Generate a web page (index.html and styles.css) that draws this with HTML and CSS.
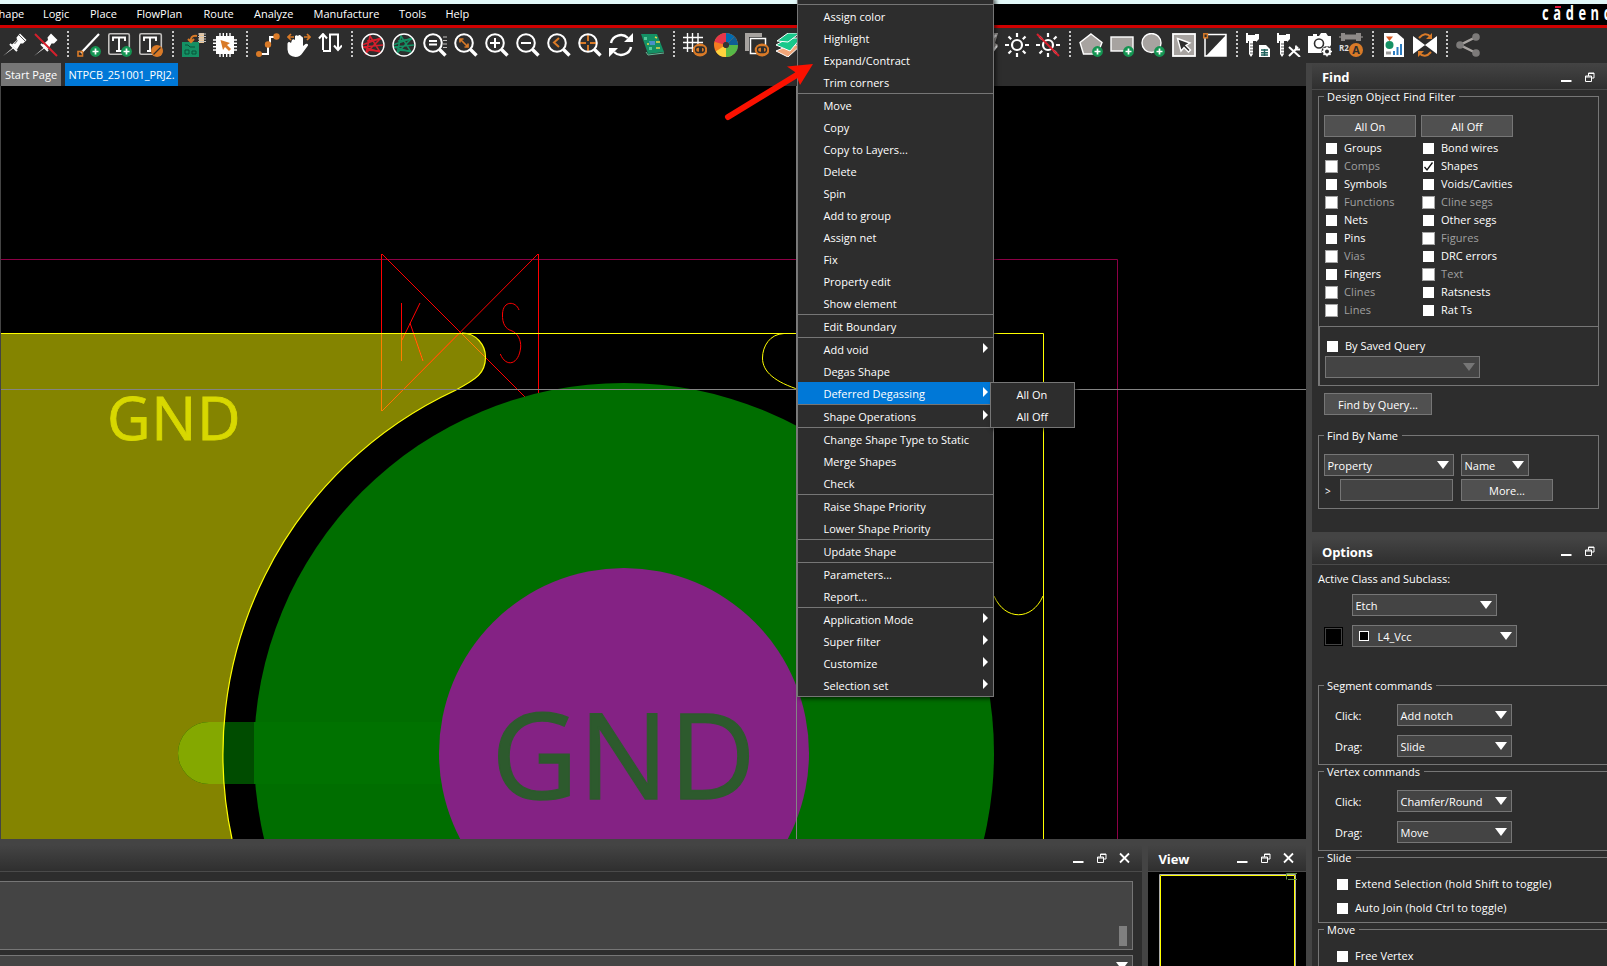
FILE: index.html
```html
<!DOCTYPE html>
<html lang="en">
<head>
<meta charset="utf-8">
<title>PCB Editor</title>
<link rel="stylesheet" href="styles.css">
</head>
<body>
<div class="app">
  <div class="titlestrip"></div>
  <nav class="menubar">
    <span class="m0">Shape</span><span class="m1">Logic</span><span class="m2">Place</span><span class="m3">FlowPlan</span><span class="m4">Route</span><span class="m5">Analyze</span><span class="m6">Manufacture</span><span class="m7">Tools</span><span>Help</span>
    <div class="brand"><span>cadence</span><i></i></div>
  </nav>
  <div class="redline"></div>
  <div class="toolbar">
    <svg class="ic" viewBox="0 0 24 24"><path d="M0 23L10 14.500L8 12.500L14 7L13.500 4.500L17 0.500L23.500 7L20 10.500L17.500 10.500L14 16.500L11.500 14.500Z" fill="#fff"/><path d="M8 11l6 6.500M14.500 7.500l-3 3.500M16 2l6 6" stroke="#2d2d2d" stroke-width=".8"/><path d="M7 11l7 7" stroke="#fff" stroke-width="2"/></svg>
    <svg class="ic" viewBox="0 0 24 24"><path d="M0 23L10 14.500L8 12.500L14 7L13.500 4.500L17 0.500L23.500 7L20 10.500L17.500 10.500L14 16.500L11.500 14.500Z" fill="#fff"/><path d="M7 11l7 7" stroke="#fff" stroke-width="2"/><path d="M1 1L23 23" stroke="#d61f2c" stroke-width="2"/></svg>
    <i class="sep"></i>
    <svg class="ic" viewBox="0 0 24 24"><path d="M4 20L22 1" stroke="#fff" stroke-width="2.200"/><rect x="1" y="18.500" width="4.500" height="4.500" fill="none" stroke="#d97a27" stroke-width="1.600"/><use href="#plus"/></svg>
    <svg class="ic" viewBox="0 0 24 24"><rect x=".8" y=".8" width="20.500" height="20.500" rx="1.500" fill="none" stroke="#c4c2c0" stroke-width="1.600"/><path d="M5 8V4.500H17V8M11 4.500V18M8 18H14" fill="none" stroke="#fff" stroke-width="1.900"/><use href="#plus"/></svg>
    <svg class="ic" viewBox="0 0 24 24"><rect x=".8" y=".8" width="21.500" height="20.500" rx="1.500" fill="none" stroke="#c4c2c0" stroke-width="1.600"/><path d="M5 8V4.500H17V8M11 4.500V18M8 18H12" fill="none" stroke="#fff" stroke-width="1.900"/><circle cx="18" cy="18" r="6" fill="#d97a27"/><path d="M14.500 21.500L21.500 14.500" stroke="#2d2d2d" stroke-width="1.200"/></svg>
    <i class="sep"></i>
    <svg class="ic" viewBox="0 0 24 24"><path d="M0 9H17V24H0Z" fill="#149064"/><path d="M3 17h4v4H3zM10 18h4v3h-4zM3 12h3l2 2h5" stroke="#0b5038" fill="none"/><path d="M15 3C10 2 8 5 9 9M6 6l3 3 3-3" stroke="#d97a27" stroke-width="2" fill="none"/><rect x="17" y="0" width="5" height="10" fill="#eec898"/><path d="M16 1h8M16 3.500h8M16 6h8M16 8.500h8" stroke="#c4c2c0"/></svg>
    <svg class="ic" viewBox="0 0 24 24"><path d="M7 0V24M10.300 0V24M13.700 0V24M17 0V24M0 7H24M0 10.300H24M0 13.700H24M0 17H24" stroke="#fff" stroke-width="1.400"/><rect x="3" y="3" width="18" height="18" fill="#fff"/><path d="M7.500 7L17 10L14 12L18 16L16 18L12 14L10 17Z" fill="#d97a27"/></svg>
    <i class="sep"></i>
    <svg class="ic" viewBox="0 0 24 24"><path d="M3 21H12V12H14V4H21" stroke="#fff" stroke-width="2" fill="none"/><g fill="#d97a27"><circle cx="3" cy="21" r="3"/><circle cx="12" cy="11.500" r="3.200"/><circle cx="20.500" cy="3.500" r="3.200"/></g></svg>
    <svg class="ic" viewBox="0 0 24 24"><path d="M8 3Q9.500 1.500 11 3L12 2Q13.500 1.500 14.500 3.500Q16 3.500 16 5.500V13L18.500 11Q21.500 10 21 12.500L15.500 20Q13 24 8.500 24Q1 23.500 0.500 16.500V10.500Q1.500 8 4 10L5 7Q6.500 5.500 8 7Z" fill="#fff"/><path d="M1 4H7M17 4H23M4 1L1 4L4 7M20 1L23 4L20 7" stroke="#d97a27" stroke-width="1.700" fill="none"/></svg>
    <svg class="ic" viewBox="0 0 24 24"><path d="M5 17V2M1 5.500L5 1L9 5.500M5 18H12V1.500H20V17M16 12.500L20 17L24 12.500" stroke="#fff" stroke-width="2" fill="none"/></svg>
    <i class="sep"></i>
    <svg class="ic" viewBox="0 0 24 24"><g fill="none" stroke="#d61f2c" stroke-width="1.500"><path d="M1 12L20 5L5 20L9 3L19 19L2 14L22 12"/><path d="M5 17L19 18M6 8L20 6"/></g><circle cx="12" cy="12" r="11" fill="none" stroke="#fff" stroke-width="1.400"/></svg>
    <svg class="ic" viewBox="0 0 24 24"><g fill="none" stroke="#149064" stroke-width="1.500"><path d="M1 12L20 5L5 20L9 3L19 19L2 14L22 12"/><path d="M5 17L19 18M6 8L20 6"/></g><circle cx="12" cy="12" r="11" fill="none" stroke="#fff" stroke-width="1.400"/></svg>
    <svg class="ic" viewBox="0 0 24 24"><use href="#lens"/><path d="M6 8H14M6 11.500H14" stroke="#fff" stroke-width="1.800"/><path d="M20 4H24M20 7.500H24M20 11H24M20 14.500H24" stroke="#c4c2c0"/></svg>
    <svg class="ic" viewBox="0 0 24 24"><use href="#lens"/><path d="M6 6L14 14M6 9.500V6H9.500M14 10.500V14H10.500" stroke="#d97a27" stroke-width="1.700" fill="none"/></svg>
    <svg class="ic" viewBox="0 0 24 24"><use href="#lens"/><path d="M5 10H15M10 5V15" stroke="#fff" stroke-width="2"/></svg>
    <svg class="ic" viewBox="0 0 24 24"><use href="#lens"/><path d="M5 10H15" stroke="#fff" stroke-width="2"/></svg>
    <svg class="ic" viewBox="0 0 24 24"><use href="#lens"/><path d="M12 5L7 9.500L12 14" stroke="#d97a27" stroke-width="2" fill="none"/></svg>
    <svg class="ic" viewBox="0 0 24 24"><path d="M2 10H8M12 10H18M10 2V8M10 12V18" stroke="#d97a27" stroke-width="1.900"/><use href="#lens"/></svg>
    <svg class="ic" viewBox="0 0 24 24"><path d="M2 10A10 9.500 0 0 1 19 5M22 14A10 9.500 0 0 1 5 19" stroke="#fff" stroke-width="2.400" fill="none"/><path d="M24 0V9H15ZM0 24V15H9Z" fill="#fff"/></svg>
    <svg class="ic" viewBox="0 0 24 24"><path d="M1 1H17L24 19L8 21Z" fill="#149064"/><path d="M6 19L8 22L24 20" stroke="#66bb99" fill="none"/><path d="M4 4h3v3H4zM9 14h3v3H9z" fill="#54c99a"/><path d="M9 8h6v4h-5z" fill="#4a90c8"/><path d="M15 4l2 1M16 9h4M7 11h2M16 15h4" stroke="#e6d84a" stroke-width="1.500"/></svg>
    <i class="sep"></i>
    <svg class="ic" viewBox="0 0 24 24"><path d="M4.500 0V19M9.500 0V19M15 0V12M0 4.500H20M0 9.500H20M0 15H11" stroke="#fff" stroke-width="1.400"/><use href="#toggle"/></svg>
    <svg class="ic" viewBox="0 0 24 24"><g fill="none" stroke-width="9"><circle cx="12" cy="12" r="7.500" stroke="#f47b20"/><path d="M12 4.500A7.500 7.500 0 0 1 17.300 6.700" stroke="#006bb0"/><path d="M17.300 6.700A7.500 7.500 0 0 1 17.300 17.300" stroke="#0e5f96"/><path d="M19.500 12A7.500 7.500 0 0 1 12 19.500" stroke="#56b947"/><path d="M12 19.500A7.500 7.500 0 0 1 5.500 16" stroke="#ffd23d"/><path d="M4.700 10A7.500 7.500 0 0 1 12 4.500" stroke="#e6354b"/></g><circle cx="12" cy="12" r="3" fill="#343434"/></svg>
    <svg class="ic" viewBox="0 0 24 24"><path d="M0 0H17V4H4V18H0Z" fill="#a7a3a0"/><rect x="5.500" y="5.500" width="15" height="15" fill="#2d2d2d" stroke="#fff" stroke-width="1.500"/><use href="#toggle"/></svg>
    <svg class="ic" viewBox="0 0 24 24"><path d="M0 18L14 12H25L12 24Z" fill="#f2a679" stroke="#fff"/><path d="M0 12L12 5H25L14 18Z" fill="#19c98b" stroke="#fff"/><path d="M1 8L12 0H24L12 9Z" fill="#19c98b" stroke="#fff"/></svg>
    <svg class="ic" viewBox="0 0 24 24"></svg><svg class="ic" viewBox="0 0 24 24"></svg><svg class="ic" viewBox="0 0 24 24"></svg><i class="sep"></i><svg class="ic" viewBox="0 0 24 24"></svg><svg class="ic" viewBox="0 0 24 24"></svg>
    <svg class="ic" viewBox="0 0 24 24"><path d="M10 0H24L21 10L24 12L18 22H10Z" fill="#a7a3a0"/><path d="M16 8l6-6M17 20l6-7" stroke="#fff" stroke-width="2"/></svg>
    <svg class="ic" viewBox="0 0 24 24"><use href="#sun"/></svg>
    <svg class="ic" viewBox="0 0 24 24"><use href="#sun"/><path d="M1 1L23 23" stroke="#d61f2c" stroke-width="2"/></svg>
    <i class="sep"></i>
    <svg class="ic" viewBox="0 0 24 24"><path d="M12 1L23 9.500L18.500 21H4.500L1 9.500Z" fill="#a7a3a0" stroke="#fff" stroke-width="1.400"/><use href="#plus"/></svg>
    <svg class="ic" viewBox="0 0 24 24"><rect x="1" y="4" width="22" height="14" fill="#a7a3a0" stroke="#fff" stroke-width="1.400"/><use href="#plus"/></svg>
    <svg class="ic" viewBox="0 0 24 24"><circle cx="10.500" cy="10" r="9.500" fill="#a7a3a0" stroke="#fff" stroke-width="1.400"/><use href="#plus"/></svg>
    <svg class="ic" viewBox="0 0 24 24"><rect x="1" y="1" width="22" height="22" fill="#a7a3a0" stroke="#fff" stroke-width="1.800"/><path d="M5.500 5.500L18 10L14 12.500L18.500 17L16.500 19L12 14.500L9 18Z" fill="#2d2d2d" stroke="#fff" stroke-width="1.400"/></svg>
    <svg class="ic" viewBox="0 0 24 24"><path d="M5 1.500H23V23H2V5" fill="none" stroke="#fff" stroke-width="1.500"/><path d="M23 2V23H3Z" fill="#fff"/><rect x=".8" y=".8" width="3.600" height="4" fill="none" stroke="#d97a27" stroke-width="1.500"/></svg>
    <i class="sep"></i>
    <svg class="ic" viewBox="0 0 24 24"><use href="#caliper"/><path d="M13 12H20L24 16V24H13Z" fill="#fff"/><path d="M15 17H22M15 19.700H22M15 22H22M18.500 16V23" stroke="#21635e" stroke-width="1.500"/></svg>
    <svg class="ic" viewBox="0 0 24 24"><use href="#caliper"/><path d="M12 23L21 14M12 14L23 24" stroke="#fff" stroke-width="2"/><path d="M19 12.500V16.500H23" stroke="#fff" stroke-width="1.800" fill="none"/></svg>
    <svg class="ic" viewBox="0 0 24 24"><path d="M0 3H5V1H9V3H11L13 0H18L20 3H23V12L18 20H0Z" fill="#fff"/><circle cx="11" cy="10.500" r="4.500" fill="#fff" stroke="#2d2d2d" stroke-width="1.600"/><circle cx="19" cy="18.500" r="5.500" fill="#2d2d2d"/><circle cx="19" cy="18.500" r="3" fill="none" stroke="#fff" stroke-width="2"/><path d="M19 13.500V15M19 22V23.500M14 18.500H16M22 18.500H24M15.500 15l1 1M22.500 15l-1 1M15.500 22l1-1M22.500 22l-1-1" stroke="#fff" stroke-width="1.500"/></svg>
    <svg class="ic" viewBox="0 0 24 24"><path d="M0 4H3M20 4H24" stroke="#a7a3a0"/><path d="M2 0H6V1.500H17V0H22V8H17V6.500H6V8H2Z" fill="#8e8a88"/><text x="0" y="18" class="r2">R2</text><circle cx="17" cy="17" r="7" fill="#d97a27"/><text x="17" y="21" class="ra">A</text></svg>
    <i class="sep"></i>
    <svg class="ic" viewBox="0 0 24 24"><path d="M2 0H15L22 6V24H2Z" fill="#fff"/><path d="M4 3.500H11L7.500 8Z" fill="#d8571e"/><circle cx="7.500" cy="12" r="4" fill="#149064"/><path d="M4 20H9" stroke="#999" stroke-width="3"/><path d="M12 22V18M15.500 22V14M19 22V11" stroke="#2c7cc0" stroke-width="2"/></svg>
    <svg class="ic" viewBox="0 0 24 24"><path d="M0 3L24 21V3L0 21Z" fill="#fff"/><path d="M6 5Q12 -2 18 4M18 19Q12 26 6 20" stroke="#d97a27" stroke-width="2" fill="none"/><path d="M19 0V6H13ZM5 24V18H11Z" fill="#d97a27"/></svg>
    <i class="sep"></i>
    <svg class="ic" viewBox="0 0 24 24"><path d="M20 4L4 12L20 20" stroke="#a7a3a0" stroke-width="2.500" fill="none"/><g fill="#7c7a79"><circle cx="20" cy="4" r="3.800"/><circle cx="4" cy="12" r="3.800"/><circle cx="20" cy="20" r="3.800"/></g></svg>
  </div>

  <div class="main">
    <div class="leftcol">
      <div class="tabs"><span class="tab">Start Page</span><span class="tab active">NTPCB_251001_PRJ2.</span></div>
      <svg class="canvas" viewBox="0 86 1306 753">
        <defs>
          <path id="pour" d="M0 333H462C476 333 485.500 345 485.500 357C485.500 373 477 379 455 390.500A401 401 0 0 0 232 839H0Z"/>
          <clipPath id="inPour"><use href="#pour"/></clipPath>
          <g id="keepout" fill="none"><path d="M381.500 254V411M538.500 254V411M382 254L538 410M538 254L382 411M401.500 303V361M420 303L402 340M410 323L423 361"/><path d="M519 310C516 301 503 300 502.500 314C502 324 506 329 511 330.500C518 333 521 340 520.700 347C519 365 506 368 500.300 354"/></g>
          <path id="pad" d="M640 722H209A31 31 0 0 0 209 784H640Z"/>
        </defs>
        <rect x="0" y="86" width="1306" height="753" fill="#000"/>
        <path d="M1 259.500H1117.500V839" fill="none" stroke="#8c0046"/>
        <use href="#pour" fill="#848400"/>
        <use href="#keepout" stroke="#f00"/>
        <g clip-path="url(#inPour)"><use href="#keepout" stroke="#ff7f00"/></g>
        <use href="#pad" fill="#004c00"/>
        <g clip-path="url(#inPour)"><use href="#pad" fill="#84a800"/></g>
        <path d="M0 333.500H1043.500V839" fill="none" stroke="#ff0"/>
        <path d="M462 333C476 333 485.500 345 485.500 357C485.500 373 477 379 455 390.500A401 401 0 0 0 232 839" fill="none" stroke="#ff0" stroke-width="1.200"/>
        <path d="M784 333.500C770 334 762.500 346 762.500 358C762.500 372 775 382 800 390M994 596C1005 621 1032 621 1043 596" fill="none" stroke="#ff0"/>
        <circle cx="624" cy="753" r="370" fill="#006e00"/>
        <path d="M254 722H640V784H254Z" fill="#007200"/>
        <circle cx="624" cy="753" r="185" fill="#842284"/>
        <text class="net small" x="107" y="440">GND</text>
        <text class="net big" x="491.500" y="799">GND</text>
        <path d="M0 389.500H1306M796.500 86V839" stroke="#848484"/>
        <path d="M.5 86V839" stroke="#444"/>
      </svg>
      <div class="bottom">
        <section class="cmd">
          <header class="phead"><b></b><svg class="wbtn" viewBox="0 0 58 12"><use href="#wmin"/><use href="#wres"/><use href="#wclose"/></svg></header>
          <div class="cmdbody"><div class="log"><i></i></div><div class="cmdline"><i class="dd"></i></div></div>
        </section>
        <section class="view">
          <header class="phead"><b>View</b><svg class="wbtn" viewBox="0 0 58 12"><use href="#wmin"/><use href="#wres"/><use href="#wclose"/></svg></header>
          <svg class="mini" viewBox="1148 872 158 94"><path d="M1159.500 966V874.500H1295.500V966" fill="none" stroke="#aaa"/><path d="M1160.500 966V875.500H1294.500V966" fill="none" stroke="#ff0"/><path d="M1297 873.500H1286.500V879.500M1288 879.500H1297" fill="none" stroke="#5f8f3f"/></svg>
        </section>
      </div>
    </div>

    <aside class="side">
      <section class="find">
        <header class="phead fhead"><b>Find</b><svg class="wbtn two" viewBox="0 0 35 12"><use href="#wmin"/><use href="#wres"/></svg></header>
        <div class="group filter">
          <span class="legend wide">Design Object Find Filter</span>
          <div class="btnrow"><button>All On</button><button>All Off</button></div>
          <div class="checks">
            <label><i></i>Groups</label><label><i></i>Bond wires</label>
            <label class="off"><i></i>Comps</label><label><i><svg viewBox="0 0 11 11"><path d="M1.500 6L4 9L9.500 1.500" fill="none" stroke="#111" stroke-width="1.300"/></svg></i>Shapes</label>
            <label><i></i>Symbols</label><label><i></i>Voids/Cavities</label>
            <label class="off"><i></i>Functions</label><label class="off"><i></i>Cline segs</label>
            <label><i></i>Nets</label><label><i></i>Other segs</label>
            <label><i></i>Pins</label><label class="off"><i></i>Figures</label>
            <label class="off"><i></i>Vias</label><label><i></i>DRC errors</label>
            <label><i></i>Fingers</label><label class="off"><i></i>Text</label>
            <label class="off"><i></i>Clines</label><label><i></i>Ratsnests</label>
            <label class="off"><i></i>Lines</label><label><i></i>Rat Ts</label>
          </div>
          <div class="saved">
            <label><i></i>By Saved Query</label>
            <div class="combo w155 dim"><span></span><i class="dd"></i></div>
          </div>
        </div>
        <button class="fq">Find by Query...</button>
        <div class="group byname">
          <span class="legend">Find By Name</span>
          <div class="combo"><span>Property</span><i class="dd"></i></div><div class="combo w68"><span>Name</span><i class="dd"></i></div>
          <div class="entry"><em>&gt;</em><div class="input"></div></div><button>More...</button>
        </div>
      </section>
      <section class="options">
        <header class="phead"><b>Options</b><svg class="wbtn two" viewBox="0 0 35 12"><use href="#wmin"/><use href="#wres"/></svg></header>
        <p class="acs">Active Class and Subclass:</p>
        <div class="classes">
          <div></div><div class="combo w145"><span>Etch</span><i class="dd"></i></div>
          <div class="swatch"></div><div class="combo w165"><span><i class="sq"></i>L4_Vcc</span><i class="dd"></i></div>
        </div>
        <div class="group cmds seg"><span class="legend">Segment commands</span>
          <span class="cl">Click:</span><div class="combo"><span>Add notch</span><i class="dd"></i></div>
          <span class="cl">Drag:</span><div class="combo"><span>Slide</span><i class="dd"></i></div></div>
        <div class="group cmds"><span class="legend">Vertex commands</span>
          <span class="cl">Click:</span><div class="combo"><span>Chamfer/Round</span><i class="dd"></i></div>
          <span class="cl">Drag:</span><div class="combo"><span>Move</span><i class="dd"></i></div></div>
        <div class="group opts"><span class="legend">Slide</span>
          <label class="wide"><i></i>Extend Selection (hold Shift to toggle)</label><label class="wide"><i></i>Auto Join (hold Ctrl to toggle)</label></div>
        <div class="group opts"><span class="legend">Move</span><label><i></i>Free Vertex</label></div>
      </section>
    </aside>
  </div>
</div>

<div class="ctx">
  <div class="gap"></div>
  <ul><li>Assign color</li><li>Highlight</li><li>Expand/Contract</li><li>Trim corners</li></ul>
  <ul><li>Move</li><li>Copy</li><li>Copy to Layers...</li><li>Delete</li><li>Spin</li><li>Add to group</li><li>Assign net</li><li>Fix</li><li>Property edit</li><li>Show element</li></ul>
  <ul><li>Edit Boundary</li></ul>
  <ul><li class="sub">Add void</li><li>Degas Shape</li><li class="sub hot">Deferred Degassing</li></ul>
  <ul><li class="sub">Shape Operations</li></ul>
  <ul><li>Change Shape Type to Static</li><li>Merge Shapes</li><li>Check</li></ul>
  <ul><li>Raise Shape Priority</li><li>Lower Shape Priority</li></ul>
  <ul><li>Update Shape</li></ul>
  <ul><li>Parameters...</li><li>Report...</li></ul>
  <ul><li class="sub">Application Mode</li><li class="sub">Super filter</li><li class="sub">Customize</li><li class="sub">Selection set</li></ul>
</div>
<div class="ctx submenu"><ul><li>All On</li><li>All Off</li></ul></div>
<svg class="pointer" viewBox="720 60 100 64"><path d="M728 117L800 73" stroke="#fb1100" stroke-width="6" stroke-linecap="round"/><path d="M813 64L787 66.500L795 72L800 85Z" fill="#fb1100"/></svg>

<svg class="defs" width="0" height="0">
  <defs>
    <g id="plus"><circle cx="18.500" cy="18.500" r="5.400" fill="#149552"/><path d="M15.500 18.500H21.500M18.500 15.500V21.500" stroke="#fff" stroke-width="1.700"/></g>
    <g id="lens"><circle cx="10" cy="10" r="8.800" fill="none" stroke="#fff" stroke-width="2"/><path d="M16.500 16.500L22.500 22.500" stroke="#fff" stroke-width="3.400"/></g>
    <g id="toggle"><ellipse cx="17" cy="17" rx="7.300" ry="6.500" fill="#d97a27"/><rect x="12.500" y="14" width="9" height="5.500" rx="2.700" fill="none" stroke="#2d2d2d" stroke-width="1.300"/><path d="M16 14H19V19H16Z" fill="#2d2d2d"/></g>
    <g id="sun"><circle cx="12" cy="12" r="5" fill="none" stroke="#fff" stroke-width="2.200"/><path d="M12 0V4M12 20V24M0 12H4M20 12H24M3.500 3.500L6.200 6.200M17.800 17.800L20.500 20.500M3.500 20.500L6.200 17.800M17.800 6.200L20.500 3.500" stroke="#fff" stroke-width="2.200"/></g>
    <g id="caliper"><path d="M0 0H2V2H9V1H13V6L10 9V8H7V21L5 24L3 21V8H2V10H0Z" fill="#fff"/><path d="M4 11H7M4 14H7M4 17H7M4 20H7" stroke="#2d2d2d" stroke-width=".8"/></g>
    <path id="wmin" d="M0 10H10.500" stroke="#fff" stroke-width="2"/>
    <path id="wres" d="M24.500 5H30.500V10.500H24.500ZM24.500 6H30.500M27.500 5V2H33V7H30.500M27.500 2.500H33" fill="none" stroke="#fff"/>
    <path id="wclose" d="M47 1.500L56 10.500M56 1.500L47 10.500" stroke="#fff" stroke-width="1.800"/>
  </defs>
</svg>
</body>
</html>
```
FILE: styles.css
```css
* { box-sizing: border-box; }
body {
  margin: 0; width: 1607px; height: 966px; overflow: hidden; position: relative;
  background: #2d2d2d; color: #fff;
  font: 11px/14px "Open Sans", "Noto Sans", sans-serif;
}
.app { display: flex; flex-direction: column; height: 966px; }
.titlestrip { height: 4px; background: #e1f7f7; }
.menubar { height: 21px; background: #000; display: flex; align-items: center; padding-bottom: 2px; position: relative; overflow: hidden; white-space: nowrap; }
.menubar > span { flex: none; }
.m0 { width: 50.500px; margin-left: -7.500px; }
.m1 { width: 47px; }
.m2 { width: 46.500px; }
.m3 { width: 67px; }
.m4 { width: 50.500px; }
.m5 { width: 59.500px; }
.m6 { width: 85.500px; }
.m7 { width: 46.500px; }
.brand { position: absolute; left: 1541.500px; top: -3px; font-size: 19.500px; line-height: 24px; font-weight: 700; }
.brand span { display: block; transform: scaleX(.66); transform-origin: 0 0; letter-spacing: 7px; }
.brand i { position: absolute; left: 13px; top: 5px; width: 6px; height: 2px; background: #e2183c; }
.redline { height: 3px; background: #d00000; }
.toolbar { height: 35px; background: #2d2d2d; display: flex; padding-top: 5px; align-items: flex-start; overflow: hidden; }
.ic { flex: none; width: 24px; height: 24px; margin: 0 3.500px; }
.toolbar > .ic:first-child { margin-left: 3px; }
.sep { flex: none; width: 2px; height: 26px; margin: -2px 5px 0; background: repeating-linear-gradient(#c8c8c8 0 2px, transparent 2px 4px); }
.r2 { font: 700 8px "Open Sans", sans-serif; fill: #ddd; }
.ra { font: 700 11px "Open Sans", sans-serif; fill: #2d2d2d; text-anchor: middle; }

.main { display: flex; height: 903px; }
.leftcol { width: 1306px; display: flex; flex-direction: column; }
.tabs { height: 23px; background: #2d2d2d; display: flex; gap: 4px; padding-left: 1px; }
.tab { height: 23px; width: 60px; background: #767676; line-height: 23px; text-align: center; }
.tab.active { width: 113px; background: #0078d7; letter-spacing: -.1px; }
.canvas { width: 1306px; height: 753px; display: block; }
.net { font-family: "Open Sans", "Noto Sans", sans-serif; }
.net.small { font-size: 60px; fill: #d8d800; stroke: #d8d800; stroke-width: .8px; letter-spacing: .6px; }
.net.big { font-size: 119px; fill: #2d5a2d; stroke: #2d5a2d; stroke-width: 1.5px; letter-spacing: .8px; }

.phead { height: 33px; background: linear-gradient(#444 6px, #2f2f2f); border-bottom: 1px solid #4a4a4a; display: flex; align-items: center; justify-content: space-between; padding: 7px 11px 0 10px; }
.phead b { font-size: 13px; line-height: 18px; letter-spacing: -.1px; }
.wbtn { width: 58px; height: 12px; margin-top: -1px; }
.wbtn.two { width: 35px; }
.bottom { height: 127px; display: flex; background: #444; gap: 6px; }
.cmd { width: 1142px; background: #2d2d2d; }
.view { width: 158px; background: #000; }
.view .phead { padding-left: 10.500px; }
.mini { width: 158px; height: 94px; display: block; }
.cmdbody { padding: 9px 9px 0 0; }
.log { height: 69px; background: #444; border: 1px solid #767676; border-left: 0; display: flex; justify-content: flex-end; align-items: flex-end; padding: 0 5px 3px; }
.log i { width: 8px; height: 20px; background: #7f7f7f; }
.cmdline { margin-top: 5px; height: 20px; background: #444; border: 1px solid #767676; border-left: 0; display: flex; justify-content: flex-end; padding: 6px 4px; }

.side { width: 301px; border-left: 6px solid #444; background: #2d2d2d; overflow: hidden; }
.find { height: 469px; padding-bottom: 1px; }
.fhead { height: 27px; padding-top: 2px; background: linear-gradient(#444, #2f2f2f); }
.group { position: relative; border: 1px solid #767676; margin-left: 6px; }
.legend { position: absolute; left: 5px; top: -7px; padding: 0 4px 0 3px; background: #2d2d2d; white-space: nowrap; }
.legend.wide { letter-spacing: .15px; }
.filter { width: 281px; height: 290px; margin-top: 6px; padding: 18px 0 0 5px; }
.btnrow { display: flex; gap: 5px; }
button { font: inherit; color: #fff; background: #505050; border: 1px solid #767676; border-radius: 0; height: 22px; width: 92px; padding: 2px 0 0; display: block; line-height: 18px; }
.checks { display: grid; grid-template-columns: 97px 1fr; grid-auto-rows: 18px; padding: 2px 0 0 2px; height: 189px; }
label { display: flex; align-items: center; gap: 7px; white-space: nowrap; }
label > i { width: 11px; height: 11px; background: #fff; flex: none; }
label.wide { letter-spacing: .15px; }
.off > i { width: 13px; height: 13px; margin: 0 -1px; border: 1px solid #a4a4a4; }
.off { color: #a0a0a0; letter-spacing: .1px; }
label svg { display: block; width: 11px; height: 11px; }
.saved { margin-left: -5px; height: 60px; border: 1px solid #767676; border-width: 1px 0 0 1px; padding: 11px 0 0 5px; display: flex; flex-direction: column; gap: 2px; }
.saved label { height: 16px; padding-left: 2px; }
.combo { height: 22px; background: #444; border: 1px solid #767676; display: flex; align-items: center; justify-content: space-between; padding: 0 4px 0 2.500px; white-space: nowrap; }
.combo span { display: flex; align-items: center; padding-top: 1px; }
.dd { flex: none; width: 12px; height: 8px; background: #fff; clip-path: polygon(0 0, 100% 0, 50% 100%); }
.dim .dd { background: #767676; }
.w155 { width: 155px; }
.w68 { width: 68px; }
.w145 { width: 145px; }
.w165 { width: 165px; }
.fq { width: 108px; margin: 7px 0 0 12px; }
.byname { width: 281px; height: 74px; margin-top: 20px; padding: 18px 0 0 5px; display: grid; grid-template-columns: 130px 92px; column-gap: 7px; row-gap: 3px; grid-auto-rows: 22px; }
.entry { display: flex; align-items: center; }
.entry em { font-style: normal; width: 16px; padding: 2px 0 0 1px; font-size: 10px; }
.input { width: 113px; height: 22px; background: #444; border: 1px solid #767676; }

.acs { margin: 7px 0 8px 6px; }
.classes { display: grid; grid-template-columns: 28px 1fr; grid-auto-rows: 22px; row-gap: 9px; padding-left: 12px; }
.swatch { width: 19px; height: 19px; margin-top: 2px; background: #000; border: 1px solid #000; box-shadow: inset 0 0 0 1px #444; }
.sq { width: 10px; height: 10px; border: 1px solid #fff; background: #000; margin: -2px 9px 0 3px; }
.options .group { width: 330px; }
.cmds { height: 80px; margin-top: 6px; padding: 18px 0 0 16px; display: grid; grid-template-columns: 62px 115px; grid-auto-rows: 22px; row-gap: 9px; align-items: center; }
.cl { padding-top: 2px; }
.options .seg { margin-top: 38px; }
.cmds .combo { width: 115px; }
.opts { height: 66px; margin-top: 6px; padding: 14px 0 0 18px; }
.opts label { height: 24px; }

.ctx { position: absolute; left: 797px; top: -3px; width: 197px; background: #2d2d2d; border: 1px solid #767676; box-shadow: 2px 2px 4px rgba(0,0,0,.6); letter-spacing: .03px; }
.ctx ul { list-style: none; margin: 0; padding: 0; border-top: 1px solid #767676; }
.gap { height: 6px; }
.ctx li { height: 22px; line-height: 23px; padding-left: 25.400px; display: flex; justify-content: space-between; white-space: nowrap; }
.sub::after { content: ""; width: 5px; height: 10px; margin: 5px 5px 0 0; background: #fff; clip-path: polygon(0 0, 100% 50%, 0 100%); }
.hot { background: #0078d7; }
.submenu { left: 990px; top: 382px; width: 85px; }
.submenu ul { border: 0; }
.pointer { position: absolute; left: 720px; top: 60px; width: 100px; height: 64px; }
.defs { position: absolute; }
```
